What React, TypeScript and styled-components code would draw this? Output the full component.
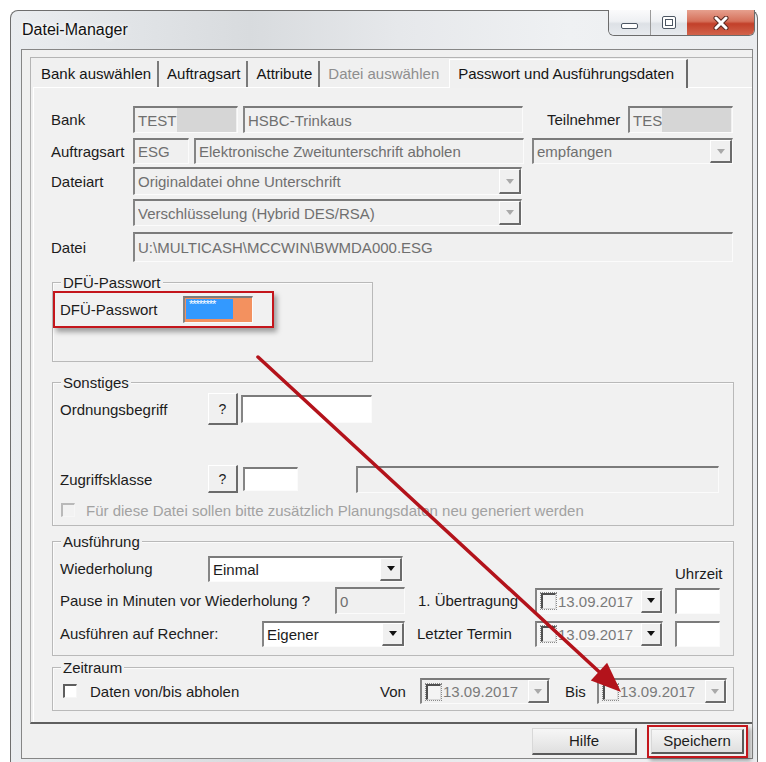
import React from "react";
import styled, { createGlobalStyle, css } from "styled-components";

const GlobalStyle = createGlobalStyle`
  html, body { margin: 0; padding: 0; background: #ffffff; }
  body {
    font-family: "Liberation Sans", Arial, sans-serif;
    font-size: 15px;
    color: #1c1c1c;
  }
  * { box-sizing: border-box; }
`;

const sunken = css`
  border-style: solid;
  border-width: 2px 1px 1px 2px;
  border-color: #7b7b7b #fbfbfb #fbfbfb #858585;
`;

const raised = css`
  border-style: solid;
  border-width: 1px 2px 2px 1px;
  border-color: #ffffff #6b6b6b #6b6b6b #ffffff;
`;

const Page = styled.div`
  position: relative;
  width: 766px;
  height: 762px;
  overflow: hidden;
  padding: 10px 0 0 10px;
`;

const Window = styled.div`
  width: 748px;
  height: 752px;
  border: 1px solid #6e6e6e;
  border-bottom: none;
  border-radius: 8px 8px 0 0;
  background: linear-gradient(
    90deg,
    #eaedf0 0%,
    #e2e5e8 14%,
    #d8dbde 32%,
    #e6e8eb 52%,
    #eff1f3 75%,
    #eaecef 100%
  );
  display: flex;
  flex-direction: column;
  padding: 0 4px 3px 10px;
`;

const TitleBar = styled.div`
  height: 38px;
  flex: none;
  display: flex;
  align-items: flex-start;
`;

const Title = styled.span`
  padding: 10px 0 0 1px;
  font-size: 16px;
  line-height: 18px;
  color: #111;
  text-shadow: 0 0 6px #ffffff, 0 0 3px #ffffff;
`;

const CaptionButtons = styled.div`
  display: flex;
  margin-left: auto;
  margin-top: -1px;
  margin-right: -2px;
  height: 26px;
  border: 1px solid #6c6c6c;
  border-top: none;
  border-radius: 0 0 6px 6px;
  overflow: hidden;
`;

const CapBtn = styled.div<{ $w: number; $close?: boolean }>`
  width: ${(p) => p.$w}px;
  height: 100%;
  display: flex;
  align-items: center;
  justify-content: center;
  border-left: ${(p) => (p.$close ? "none" : "1px solid #9a9a9a")};
  &:first-child { border-left: none; }
  background: ${(p) =>
    p.$close
      ? "linear-gradient(180deg, #e6a08e 0%, #d5705a 45%, #c2402a 55%, #d2634b 100%)"
      : "linear-gradient(180deg, #fbfbfc 0%, #eef0f3 45%, #dde1e6 55%, #e7eaee 100%)"};
`;

const MinGlyph = styled.span`
  width: 17px;
  height: 6px;
  margin-top: 7px;
  border: 1px solid #4c5663;
  border-radius: 2px;
  background: #ffffff;
`;

const MaxGlyph = styled.span`
  width: 14px;
  height: 13px;
  border: 1px solid #4c5663;
  border-radius: 2px;
  background: #ffffff;
  display: flex;
  align-items: center;
  justify-content: center;
  &::after {
    content: "";
    width: 6px;
    height: 5px;
    border: 1px solid #4c5663;
  }
`;

const Client = styled.div`
  flex: 1;
  border: 1px solid #868686;
  background: #f0f0f0;
  display: flex;
  flex-direction: column;
`;

const Frame = styled.div`
  margin: 7px 0 0 8px;
  height: 667px;
  flex: none;
  border-top: 1px solid #b4b4b4;
  border-left: 1px solid #b4b4b4;
  border-bottom: 2px solid #5f5f5f;
  display: flex;
  flex-direction: column;
`;

const TabBar = styled.div`
  height: 29px;
  flex: none;
  display: flex;
  align-items: flex-end;
  padding-left: 2px;
`;

const Tab = styled.div<{ $active?: boolean; $off?: boolean }>`
  height: ${(p) => (p.$active ? 29 : 26)}px;
  line-height: ${(p) => (p.$active ? 27 : 26)}px;
  padding: ${(p) => (p.$active ? "0 12px 0 8px" : "0 6px 0 8px")};
  white-space: nowrap;
  color: ${(p) => (p.$off ? "#8e8e8e" : "#141414")};
  ${(p) =>
    p.$active
      ? css`
          margin-left: 4px;
          border-top: 1px solid #ffffff;
          border-left: 1px solid #ffffff;
          border-right: 2px solid #6a6a6a;
          background: #f0f0f0;
          margin-bottom: -1px;
          position: relative;
        `
      : p.$off
      ? css``
      : css`
          border-right: 2px solid #7a7a7a;
        `}
`;

const TabPanel = styled.div`
  flex: 1;
  margin-left: 2px;
  border-top: 1px solid #ffffff;
  border-left: 1px solid #ffffff;
  background: #f1f1f1;
  padding: 18px 18px 0 17px;
  display: flex;
  flex-direction: column;
`;

const Row = styled.div<{ $mt?: number; $h?: number }>`
  display: flex;
  align-items: center;
  flex: none;
  margin-top: ${(p) => p.$mt ?? 0}px;
  height: ${(p) => p.$h ?? 26}px;
`;

const Label = styled.span<{ $w?: number; $ml?: number; $muted?: boolean; $low?: boolean }>`
  flex: none;
  width: ${(p) => (p.$w ? `${p.$w}px` : "auto")};
  margin-left: ${(p) => p.$ml ?? 0}px;
  white-space: nowrap;
  color: ${(p) => (p.$muted ? "#a2a2a2" : "#1c1c1c")};
  align-self: ${(p) => (p.$low ? "flex-end" : "auto")};
`;

const Field = styled.div<{ $w: number; $h?: number; $ml?: number; $bg?: string; $ink?: string }>`
  ${sunken}
  flex: none;
  width: ${(p) => p.$w}px;
  height: ${(p) => p.$h ?? 26}px;
  margin-left: ${(p) => p.$ml ?? 0}px;
  background: ${(p) => p.$bg ?? "#f0f0f0"};
  color: ${(p) => p.$ink ?? "#6f6f6f"};
  display: flex;
  align-items: center;
  padding-left: 3px;
  white-space: nowrap;
  overflow: hidden;
`;

const FieldText = styled.span`
  flex: 1;
  overflow: hidden;
`;

const Redacted = styled.span<{ $w: number }>`
  flex: none;
  width: ${(p) => p.$w}px;
  align-self: stretch;
  margin: 0 1px 0 auto;
  background: #d6d6d6;
`;

const DropBtn = styled.span<{ $on?: boolean; $w?: number }>`
  ${raised}
  flex: none;
  width: ${(p) => p.$w ?? 22}px;
  align-self: stretch;
  background: #f0f0f0;
  display: flex;
  align-items: center;
  justify-content: center;
  &::after {
    content: "";
    border-left: 4px solid transparent;
    border-right: 4px solid transparent;
    border-top: 5px solid ${(p) => (p.$on ? "#111111" : "#a9a9a9")};
  }
`;

const DateCheck = styled.span`
  flex: none;
  width: 15px;
  height: 16px;
  margin: 0 2px 0 1px;
  border-style: solid;
  border-width: 2px 1px 1px 2px;
  border-color: #505050 #d8d8d8 #d8d8d8 #505050;
  outline: 1px dotted #8a8a8a;
  outline-offset: 0px;
  background: #f4f4f4;
`;

const QButton = styled.div<{ $h: number }>`
  ${raised}
  flex: none;
  width: 30px;
  height: ${(p) => p.$h}px;
  background: #f0f0f0;
  display: flex;
  align-items: center;
  justify-content: center;
  font-size: 14px;
`;

const CheckBox = styled.span<{ $ml?: number; $white?: boolean }>`
  flex: none;
  width: 14px;
  height: 14px;
  margin-left: ${(p) => p.$ml ?? 0}px;
  border-style: solid;
  border-width: 2px 1px 1px 2px;
  border-color: ${(p) => (p.$white ? "#5e5e5e #f6f6f6 #f6f6f6 #5e5e5e" : "#b9b9b9 #f6f6f6 #f6f6f6 #b9b9b9")};
  background: ${(p) => (p.$white ? "#ffffff" : "#f2f2f2")};
`;

const Group = styled.div<{ $mt: number; $h: number; $w: number; $pt: number; $pl?: number }>`
  position: relative;
  flex: none;
  margin: ${(p) => p.$mt}px 0 0 1px;
  width: ${(p) => p.$w}px;
  height: ${(p) => p.$h}px;
  border: 1px solid #b9b9b9;
  box-shadow: inset 1px 1px 0 #fbfbfb;
  padding: ${(p) => p.$pt}px 0 0 ${(p) => p.$pl ?? 7}px;
  display: flex;
  flex-direction: column;
`;

const Legend = styled.span`
  position: absolute;
  top: -9px;
  left: 8px;
  padding: 0 2px;
  line-height: 17px;
  background: #f1f1f1;
  white-space: nowrap;
`;

const Highlight = styled.div`
  flex: none;
  width: 221px;
  height: 37px;
  border: 2px solid #c4161c;
  box-shadow: 3px 4px 5px rgba(0, 0, 0, 0.35);
  display: flex;
  align-items: center;
  justify-content: space-between;
  padding: 0 19px 0 5px;
`;

const PasswordBox = styled.div`
  ${sunken}
  width: 70px;
  height: 27px;
  background: #f3915f;
  display: flex;
  align-items: flex-start;
  padding: 1px 0 0 1px;
`;

const Selection = styled.span`
  width: 47px;
  height: 20px;
  background: #3399ff;
  color: #ffffff;
  font-size: 11px;
  line-height: 11px;
  letter-spacing: -1px;
  padding-left: 3px;
  white-space: nowrap;
`;

const ButtonBar = styled.div`
  flex: 1;
  display: flex;
  align-items: center;
  justify-content: flex-end;
  padding-right: 4px;
`;

const PushButton = styled.div<{ $w: number; $h: number }>`
  flex: none;
  width: ${(p) => p.$w}px;
  height: ${(p) => p.$h}px;
  border-style: solid;
  border-width: 1px 2px 2px 1px;
  border-color: #d8d8d8 #5a5a5a #5a5a5a #d8d8d8;
  background: linear-gradient(180deg, #f6f6f6 0%, #ebebeb 50%, #dfdfdf 100%);
  display: flex;
  align-items: center;
  justify-content: center;
`;

const SaveFrame = styled.div`
  flex: none;
  margin-left: 10px;
  width: 101px;
  height: 33px;
  border: 2px solid #c4161c;
  box-shadow: 3px 3px 4px rgba(0, 0, 0, 0.3);
  display: flex;
  align-items: center;
  justify-content: center;
`;

const ArrowLayer = styled.svg`
  position: absolute;
  left: 0;
  top: 0;
  pointer-events: none;
`;

function Combo(props: { w: number; ml?: number; text: string; on?: boolean; bg?: string; ink?: string; h?: number }) {
  return (
    <Field $w={props.w} $ml={props.ml} $bg={props.bg} $ink={props.ink} $h={props.h}>
      <FieldText>{props.text}</FieldText>
      <DropBtn $on={props.on} />
    </Field>
  );
}

function DatePicker(props: { w: number; ml?: number; on?: boolean }) {
  return (
    <Field $w={props.w} $ml={props.ml} $bg={props.on ? "#f7f7f7" : "#f0f0f0"} $ink="#7a7a7a" $h={26}>
      <DateCheck />
      <FieldText>13.09.2017</FieldText>
      <DropBtn $on={props.on} $w={21} />
    </Field>
  );
}

// arrow geometry: tail near the password box, head at the "Bis" date picker
const tail = { x: 258, y: 357 };
const tip = { x: 621, y: 692 };
const dx = tip.x - tail.x;
const dy = tip.y - tail.y;
const len = Math.hypot(dx, dy);
const ux = dx / len;
const uy = dy / len;
const headLen = 30;
const headHalf = 12;
const base = { x: tip.x - ux * headLen, y: tip.y - uy * headLen };
const headPts = [
  `${tip.x},${tip.y}`,
  `${base.x - uy * headHalf},${base.y + ux * headHalf}`,
  `${base.x + uy * headHalf},${base.y - ux * headHalf}`,
].join(" ");

export default function App() {
  return (
    <Page>
      <GlobalStyle />
      <Window>
        <TitleBar>
          <Title>Datei-Manager</Title>
          <CaptionButtons>
            <CapBtn $w={41}>
              <MinGlyph />
            </CapBtn>
            <CapBtn $w={37}>
              <MaxGlyph />
            </CapBtn>
            <CapBtn $w={67} $close>
              <svg width="16" height="14" viewBox="0 0 16 14">
                <path
                  d="M3 2 L13 12 M13 2 L3 12"
                  stroke="#5a2a22"
                  strokeWidth="5"
                  strokeLinecap="round"
                />
                <path
                  d="M3 2 L13 12 M13 2 L3 12"
                  stroke="#ffffff"
                  strokeWidth="3"
                  strokeLinecap="round"
                />
              </svg>
            </CapBtn>
          </CaptionButtons>
        </TitleBar>
        <Client>
          <Frame>
            <TabBar>
              <Tab>Bank auswählen</Tab>
              <Tab>Auftragsart</Tab>
              <Tab>Attribute</Tab>
              <Tab $off>Datei auswählen</Tab>
              <Tab $active>Passwort und Ausführungsdaten</Tab>
            </TabBar>
            <TabPanel>
              <Row $h={27}>
                <Label $w={82}>Bank</Label>
                <Field $w={105} $h={27}>
                  <span>TEST</span>
                  <Redacted $w={59} />
                </Field>
                <Field $w={280} $h={27} $ml={5}>
                  HSBC-Trinkaus
                </Field>
                <Label $ml={24} $w={81}>
                  Teilnehmer
                </Label>
                <Field $w={105} $h={27}>
                  <span>TES</span>
                  <Redacted $w={69} />
                </Field>
              </Row>
              <Row $mt={5}>
                <Label $w={82}>Auftragsart</Label>
                <Field $w={56}>ESG</Field>
                <Field $w={330} $ml={5}>
                  Elektronische Zweitunterschrift abholen
                </Field>
                <Combo w={201} ml={8} text="empfangen" />
              </Row>
              <Row $mt={3} $h={28}>
                <Label $w={82}>Dateiart</Label>
                <Combo w={389} h={28} text="Originaldatei ohne Unterschrift" />
              </Row>
              <Row $mt={4} $h={27}>
                <Label $w={82} />
                <Combo w={389} h={27} text="Verschlüsselung (Hybrid DES/RSA)" />
              </Row>
              <Row $mt={6} $h={30}>
                <Label $w={82}>Datei</Label>
                <Field $w={600} $h={30}>
                  U:\MULTICASH\MCCWIN\BWMDA000.ESG
                </Field>
              </Row>

              <Group $mt={20} $w={321} $h={80} $pt={8} $pl={0}>
                <Legend>DFÜ-Passwort</Legend>
                <Highlight>
                  <span>DFÜ-Passwort</span>
                  <PasswordBox>
                    <Selection>********</Selection>
                  </PasswordBox>
                </Highlight>
              </Group>

              <Group $mt={20} $w={682} $h={144} $pt={10}>
                <Legend>Sonstiges</Legend>
                <Row $h={32}>
                  <Label $w={148}>Ordnungsbegriff</Label>
                  <QButton $h={32}>?</QButton>
                  <Field $w={131} $h={28} $ml={3} $bg="#ffffff" />
                </Row>
                <Row $mt={40} $h={28}>
                  <Label $w={148}>Zugriffsklasse</Label>
                  <QButton $h={28}>?</QButton>
                  <Field $w={55} $h={24} $ml={5} $bg="#ffffff" />
                  <Field $w={363} $h={27} $ml={58} />
                </Row>
                <Row $mt={9} $h={16}>
                  <CheckBox $ml={1} />
                  <Label $ml={11} $muted>
                    Für diese Datei sollen bitte zusätzlich Planungsdaten neu generiert werden
                  </Label>
                </Row>
              </Group>

              <Group $mt={15} $w={682} $h={115} $pt={13}>
                <Legend>Ausführung</Legend>
                <Row $h={27}>
                  <Label $w={148}>Wiederholung</Label>
                  <Combo w={195} text="Einmal" on bg="#ffffff" ink="#1c1c1c" />
                  <Label $ml={272} $low>
                    Uhrzeit
                  </Label>
                </Row>
                <Row $mt={5} $h={27}>
                  <Label $w={275}>Pause in Minuten vor Wiederholung ?</Label>
                  <Field $w={70} $h={27}>
                    0
                  </Field>
                  <Label $ml={13} $w={117}>
                    1. Übertragung
                  </Label>
                  <DatePicker w={128} on />
                  <Field $w={45} $h={26} $ml={12} $bg="#ffffff" />
                </Row>
                <Row $mt={6} $h={27}>
                  <Label $w={202}>Ausführen auf Rechner:</Label>
                  <Combo w={143} text="Eigener" on bg="#ffffff" ink="#1c1c1c" />
                  <Label $ml={12} $w={118}>
                    Letzter Termin
                  </Label>
                  <DatePicker w={128} on />
                  <Field $w={45} $h={26} $ml={12} $bg="#ffffff" />
                </Row>
              </Group>

              <Group $mt={11} $w={682} $h={44} $pt={10}>
                <Legend>Zeitraum</Legend>
                <Row $h={26}>
                  <CheckBox $ml={3} $white />
                  <Label $ml={13} $w={290}>
                    Daten von/bis abholen
                  </Label>
                  <Label $w={40}>Von</Label>
                  <DatePicker w={130} />
                  <Label $ml={15} $w={32}>
                    Bis
                  </Label>
                  <DatePicker w={130} />
                </Row>
              </Group>
            </TabPanel>
          </Frame>
          <ButtonBar>
            <PushButton $w={105} $h={27}>Hilfe</PushButton>
            <SaveFrame>
              <PushButton $w={93} $h={25}>Speichern</PushButton>
            </SaveFrame>
          </ButtonBar>
        </Client>
      </Window>
      <ArrowLayer width={766} height={762} viewBox="0 0 766 762">
        <line
          x1={tail.x}
          y1={tail.y}
          x2={base.x + ux * 2}
          y2={base.y + uy * 2}
          stroke="#b3131b"
          strokeWidth={3.5}
          strokeLinecap="round"
        />
        <polygon points={headPts} fill="#b3131b" />
      </ArrowLayer>
    </Page>
  );
}
